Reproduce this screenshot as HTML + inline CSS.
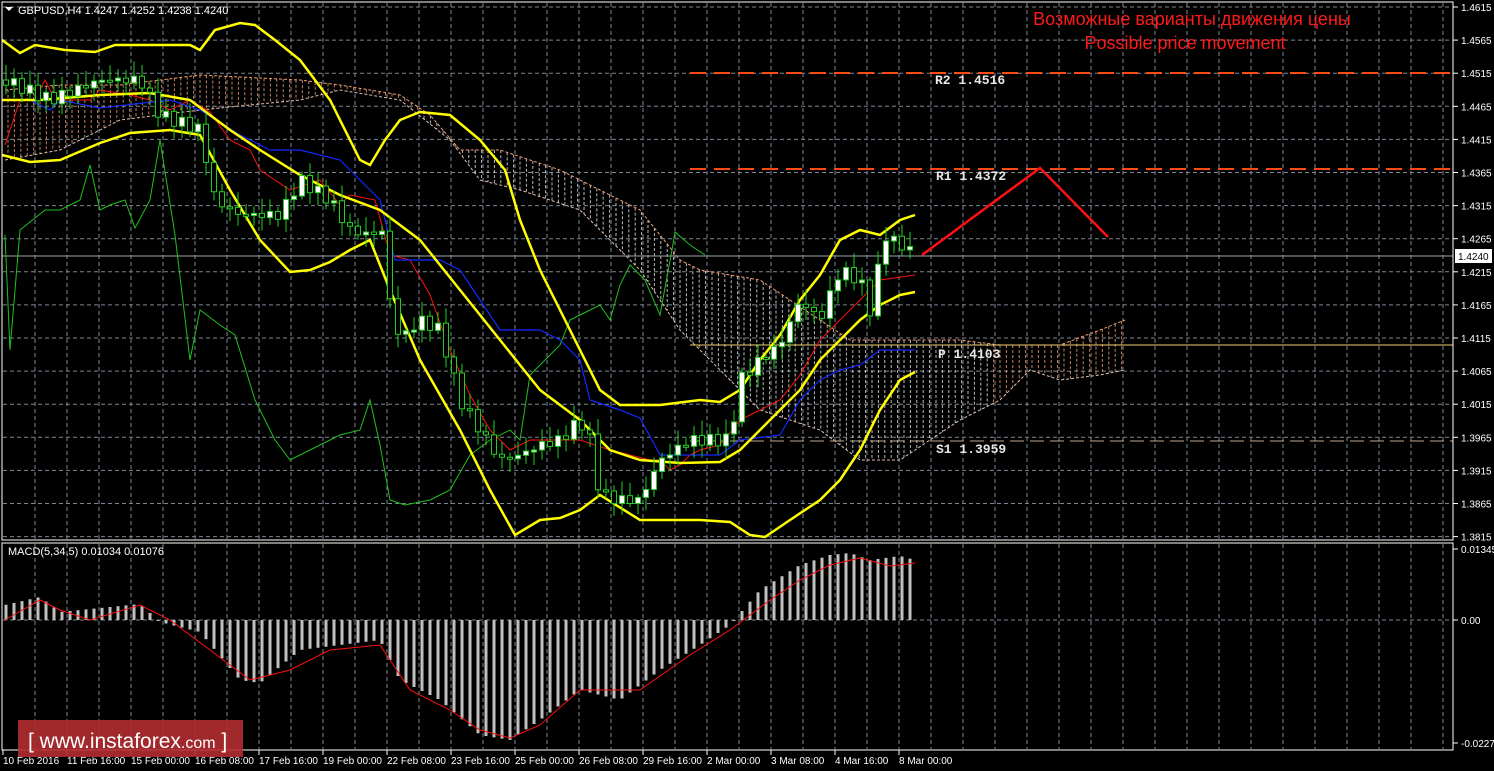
<!DOCTYPE html><html><head><meta charset="utf-8"><style>
body{margin:0;background:#000;width:1494px;height:771px;overflow:hidden;font-family:"Liberation Sans",sans-serif}
svg{position:absolute;left:0;top:0}
</style></head><body>
<svg id="s" width="1494" height="771" xmlns="http://www.w3.org/2000/svg" font-family="Liberation Sans, sans-serif">
<rect width="1494" height="771" fill="#000"/>
<g id="grid"></g>
<g id="cloud"></g>
<line x1="690" y1="73" x2="1453" y2="73" stroke="#ff4a14" stroke-width="2" stroke-dasharray="16,8"/>
<line x1="690" y1="169" x2="1453" y2="169" stroke="#ff4a14" stroke-width="2" stroke-dasharray="16,8"/>
<line x1="690" y1="345" x2="1453" y2="345" stroke="#f0d070" stroke-width="1"/>
<line x1="690" y1="441" x2="1453" y2="441" stroke="#c0a890" stroke-width="1" stroke-dasharray="14,6"/>
<line x1="2" y1="256" x2="1453" y2="256" stroke="#9aa4ae" stroke-width="1"/>
<g id="lines"></g>
<g id="candles"></g>
<g id="macd"></g>
<polyline points="922,255 1040,168 1108,237" fill="none" stroke="#ff1010" stroke-width="2.5"/>
<g font-family="Liberation Mono, monospace" font-size="13" fill="#e8e8e8" font-weight="bold">
<text x="935" y="84">R2 1.4516</text><text x="936" y="180">R1 1.4372</text>
<text x="938" y="358">P 1.4103</text><text x="936" y="453">S1 1.3959</text></g>
<text x="1192" y="25" fill="#ff1a1a" font-size="18" text-anchor="middle">Возможные варианты движения цены</text>
<text x="1185" y="49" fill="#ff1a1a" font-size="18" text-anchor="middle">Possible price movement</text>
<rect x="2" y="2" width="1451" height="538" fill="none" stroke="#fff"/>
<rect x="2" y="543" width="1451" height="207" fill="none" stroke="#fff"/>
<path d="M5 7 L13 7 L9 11Z" fill="#fff"/>
<text x="18" y="14" fill="#fff" font-size="11">GBPUSD,H4  1.4247 1.4252 1.4238 1.4240</text>
<text x="8" y="555" fill="#fff" font-size="11">MACD(5,34,5) 0.01034 0.01076</text>
<g id="axis" fill="#fff" font-size="10"></g>
<rect x="1455" y="249" width="37" height="14" fill="#fff"/>
<text x="1458" y="260" fill="#000" font-size="10">1.4240</text>
<rect x="18" y="720" width="225" height="37" fill="#b32c30" opacity="0.9"/>
<text x="28" y="748" fill="#fff" font-size="21">[ www.instaforex<tspan font-size="16">.com</tspan> ]</text>
</svg>
<script>
(function(){
var NS="http://www.w3.org/2000/svg";
function el(p,t,a){var e=document.createElementNS(NS,t);for(var k in a)e.setAttribute(k,a[k]);document.getElementById(p).appendChild(e);return e;}
for(var k=0;k<=44;k++){var x=35+32*k;el("grid","line",{x1:x,y1:3,x2:x,y2:539,stroke:"#7c8794","stroke-dasharray":"4,3"});el("grid","line",{x1:x,y1:544,x2:x,y2:749,stroke:"#7c8794","stroke-dasharray":"4,3"});}
var prices=["1.4615","1.4565","1.4515","1.4465","1.4415","1.4365","1.4315","1.4265","1.4215","1.4165","1.4115","1.4065","1.4015","1.3965","1.3915","1.3865","1.3815"];
for(var i=0;i<17;i++){var y=7+33.1*i;el("grid","line",{x1:3,y1:y,x2:1452,y2:y,stroke:"#7c8794","stroke-dasharray":"4,3"});
el("axis","line",{x1:1453,y1:y,x2:1458,y2:y,stroke:"#fff"});var t=el("axis","text",{x:1461,y:y+4});t.textContent=prices[i];}
el("grid","line",{x1:3,y1:620,x2:1452,y2:620,stroke:"#7c8794","stroke-dasharray":"4,3"});
[["0.01345",549],["0.00",620],["-0.02274",743]].forEach(function(a){var t=el("axis","text",{x:1461,y:a[1]+4});t.textContent=a[0];el("axis","line",{x1:1453,y1:a[1],x2:1458,y2:a[1],stroke:"#fff"});});
var times=["10 Feb 2016","11 Feb 16:00","15 Feb 00:00","16 Feb 08:00","17 Feb 16:00","19 Feb 00:00","22 Feb 08:00","23 Feb 16:00","25 Feb 00:00","26 Feb 08:00","29 Feb 16:00","2 Mar 00:00","3 Mar 08:00","4 Mar 16:00","8 Mar 00:00"];
times.forEach(function(s,i){var x=3+64*i;el("axis","line",{x1:x,y1:750,x2:x,y2:755,stroke:"#fff"});var t=el("axis","text",{x:x,y:764});t.textContent=s;});
el("axis","line",{x1:2,y1:750,x2:1453,y2:750,stroke:"#fff"});
function poly(g,pts,c,w,d){var a={points:pts,fill:"none",stroke:c,"stroke-width":w};if(d)a["stroke-dasharray"]=d;el(g,"polyline",a);}
function interp(arr,x){for(var i=0;i<arr.length-1;i++){if(x>=arr[i][0]&&x<=arr[i+1][0]){var f=(x-arr[i][0])/(arr[i+1][0]-arr[i][0]);return arr[i][1]+f*(arr[i+1][1]-arr[i][1]);}}return arr[arr.length-1][1];}
var spanA=[[5,90],[60,85],[120,85],[200,75],[300,80],[340,85],[400,95],[430,115],[460,150],[500,150],[560,170],[600,190],[640,210],[680,260],[700,270],[760,280],[850,340],[960,340],[1000,345],[1060,345],[1100,330],[1125,320]];
var spanB=[[5,160],[60,150],[120,120],[200,110],[300,100],[340,90],[400,100],[450,140],[480,180],[520,190],[580,210],[600,230],[640,270],[680,330],[700,350],[760,410],[820,430],[860,460],[900,460],[960,420],[1000,400],[1030,370],[1060,380],[1100,375],[1125,370]];
for(var x=8;x<1125;x+=6.4){var a=interp(spanA,x),b=interp(spanB,x);var c=(x<420||x>990)?"#f0a070":"#e8e8e8";el("cloud","line",{x1:x,y1:Math.min(a,b),x2:x,y2:Math.max(a,b),stroke:c,"stroke-dasharray":"3,2","stroke-width":1,opacity:0.8});}
poly("cloud",spanA.map(function(p){return p.join(",")}).join(" "),"#f0a070",1,"3,2");
poly("cloud",spanB.map(function(p){return p.join(",")}).join(" "),"#e0c0b0",1,"3,2");
poly("lines","5,235 10,350 20,230 45,210 60,210 80,200 90,165 100,210 110,205 125,200 135,228 150,200 160,140 175,235 190,360 200,310 220,325 235,335 255,400 275,440 290,460 340,435 360,430 370,400 380,445 390,500 405,505 430,500 450,490 470,455 490,440 510,430 520,440 530,375 545,360 560,345 570,320 580,315 600,305 610,320 620,285 630,265 645,280 660,315 672,250 675,232 690,245 705,255","#20c020",1);
poly("lines","5,145 20,100 35,100 45,80 55,100 90,100 100,90 130,95 150,100 170,110 190,100 210,112 230,140 250,150 260,170 290,190 320,180 340,205 350,195 375,200 390,255 410,260 430,295 450,350 470,395 490,430 510,450 530,440 560,440 580,440 610,450 630,455 650,460 660,460 670,470 680,465 690,455 700,450 720,445 740,420 760,410 780,400 800,375 820,340 840,320 860,300 880,280 915,275","#ff1010",1);
poly("lines","5,100 30,100 50,110 60,100 100,108 170,100 200,110 240,135 270,150 300,150 340,160 380,200 395,260 440,260 460,270 480,300 500,330 540,330 560,340 580,360 590,400 620,410 640,418 660,455 720,455 740,440 780,435 800,400 820,380 840,370 860,365 880,350 915,350","#1428ff",1.2);
var ub="2,40 20,53 35,45 65,50 95,52 115,45 140,45 190,45 200,50 215,30 240,23 255,25 275,40 300,60 330,100 350,140 360,160 370,165 385,140 400,120 420,112 450,115 480,140 505,170 520,220 540,270 560,310 580,350 600,390 620,405 660,405 700,400 720,402 740,390 760,360 780,335 800,300 820,275 840,240 860,230 880,235 900,220 915,215";
var lb="2,155 30,162 60,160 100,143 130,133 170,130 200,135 230,190 260,240 290,272 310,270 330,262 350,250 370,240 390,290 420,360 460,430 490,490 515,535 540,520 560,518 580,510 600,495 640,520 700,520 730,522 750,535 765,537 790,520 820,500 840,480 860,450 880,410 900,380 915,372";
var mb="2,100 40,100 100,95 150,93 190,100 230,130 260,150 300,175 340,195 380,210 420,240 460,290 500,340 540,390 580,420 610,450 640,460 680,463 720,462 740,450 760,430 780,410 800,390 820,360 840,340 860,320 880,305 900,295 915,292";
[ub,lb,mb].forEach(function(p){poly("lines",p,"#ffff00",2.5);});
var path=[[5,80],[50,100],[100,80],[140,80],[160,115],[200,130],[215,200],[240,215],[280,215],[300,180],[330,200],[350,230],[370,235],[385,230],[390,300],[400,340],[420,320],[440,330],[460,400],[480,430],[500,460],[520,455],[540,445],[560,440],[580,420],[590,440],[600,495],[620,500],[640,500],[660,460],[690,440],[720,440],[730,440],[740,380],[760,360],[780,345],[800,300],[820,320],[840,270],[860,280],[870,310],[885,235],[900,245],[915,252]];
var prev=interp(path,5);
for(var x=6;x<=915;x+=8){var cl=interp(path,x)+Math.sin(x*0.37)*6;var op=prev;prev=cl;var bt=Math.min(op,cl),bb=Math.max(op,cl);if(bb-bt<2)bb=bt+2;
var wt=bt-3-Math.abs(Math.sin(x*1.3))*12,wb=bb+3+Math.abs(Math.cos(x*0.9))*10;
el("candles","line",{x1:x,y1:wt,x2:x,y2:wb,stroke:"#20d020"});
el("candles","rect",{x:x-2.5,y:bt,width:5,height:bb-bt,fill:cl<op?"#fff":"#000",stroke:"#20d020","stroke-width":1});}
var mh=[[5,605],[40,597],[60,612],[100,608],[140,604],[160,622],[200,632],[240,680],[260,683],[300,650],[340,645],[380,640],[400,680],[440,700],[480,735],[510,740],[540,720],[580,690],[620,700],[660,670],[700,645],[730,625],[760,590],[800,565],[830,555],[850,553],[870,560],[900,556],[915,560]];
for(var x=6;x<=915;x+=8){var v=interp(mh,x);el("macd","rect",{x:x-1.5,y:Math.min(v,620),width:3,height:Math.max(1,Math.abs(v-620)),fill:"#c0c0c0"});}
var sig=[[5,620],[40,600],[60,610],[90,620],[140,605],[170,620],[210,650],[250,680],[290,670],[330,650],[380,645],[410,690],[450,710],[480,730],[510,738],[540,725],[580,690],[610,690],[640,690],[690,655],[730,630],[770,600],[800,580],[830,565],[860,558],[890,566],[915,563]];
poly("macd",sig.map(function(p){return p.join(",")}).join(" "),"#ff1010",1);
})();
</script>
</body></html>
